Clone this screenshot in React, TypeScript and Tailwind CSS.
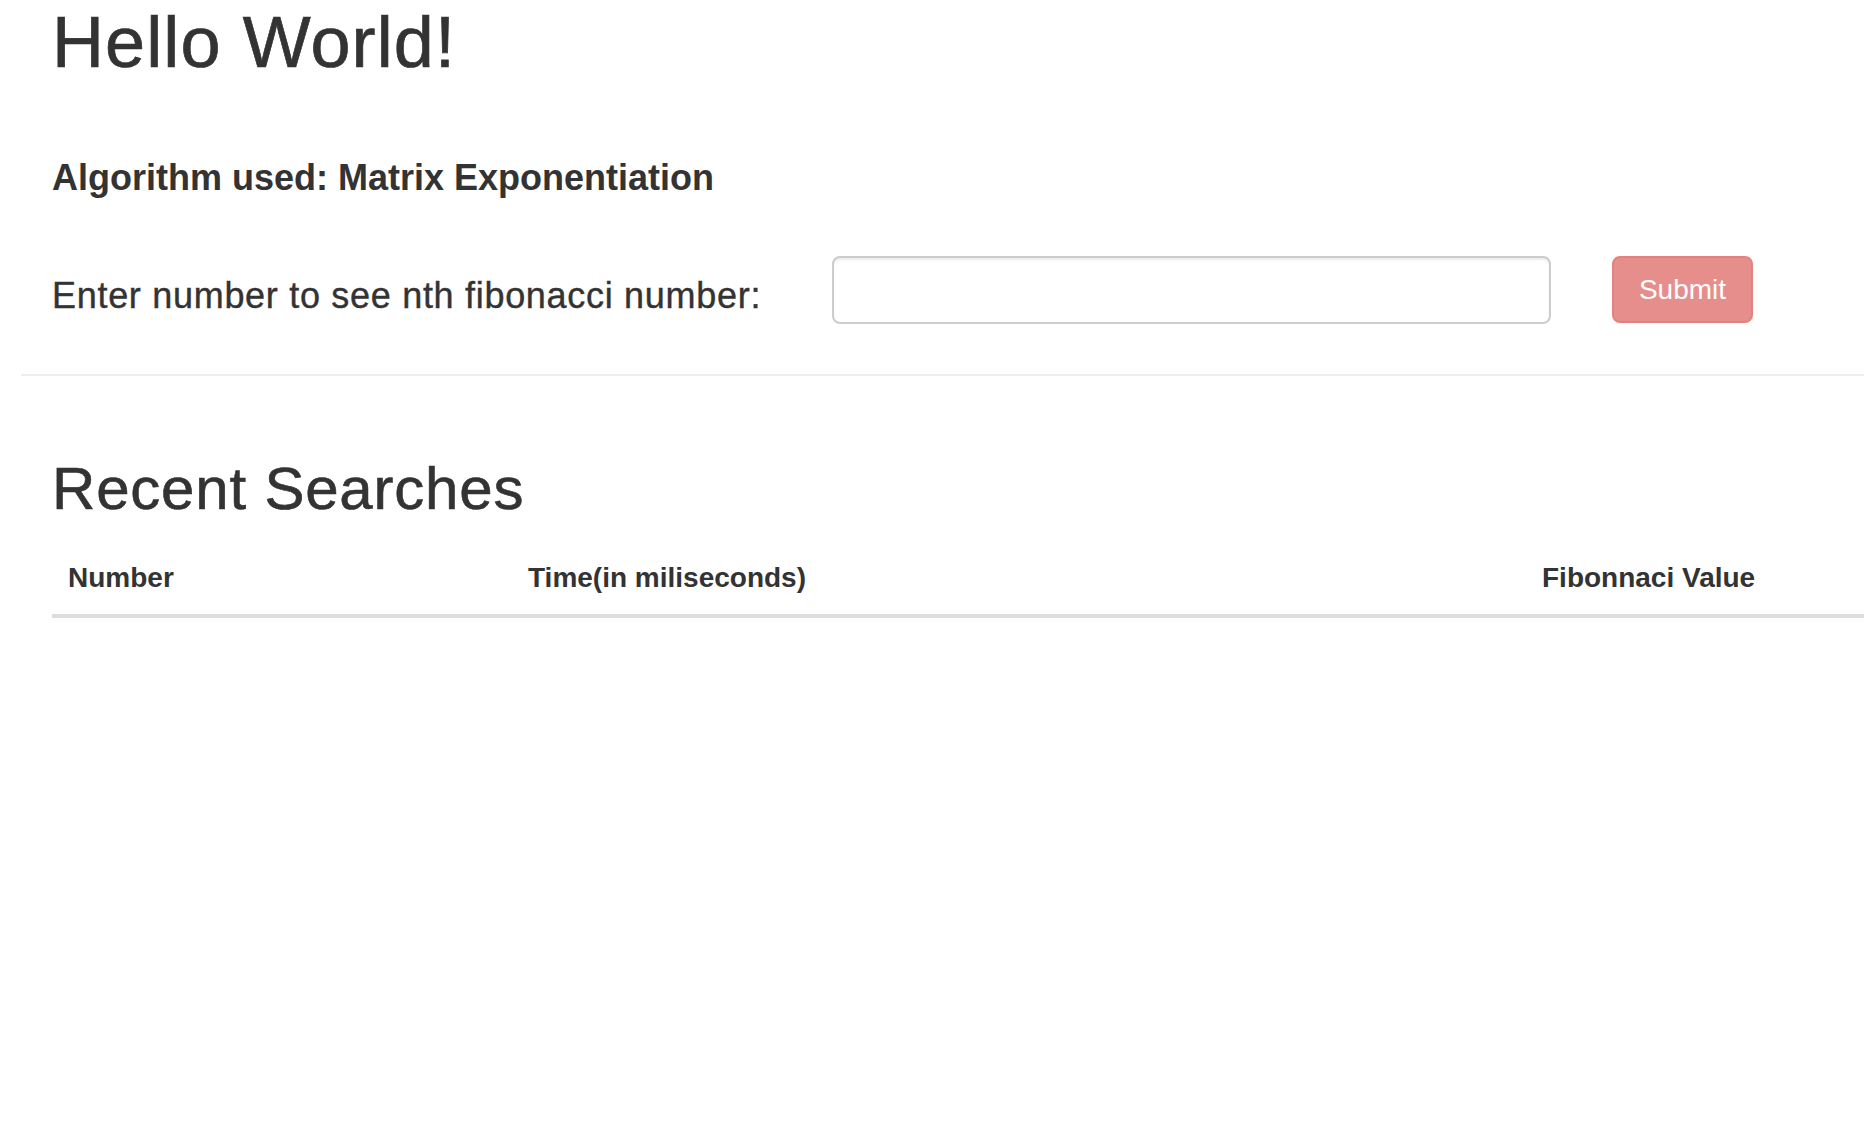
import React, { useState } from 'react';

const columns = [
  { label: 'Number', width: 'w-[460px]' },
  { label: 'Time(in miliseconds)', width: 'w-[1014px]' },
  { label: 'Fibonnaci Value', width: '' },
];

export default function App() {
  const [value, setValue] = useState('');

  return (
    <div className="min-h-screen w-full overflow-hidden bg-white text-[#333333] font-['Liberation_Sans',Arial,sans-serif]">
      <div className="pl-[52px]">
        <h1 className="mt-[3px] text-[72px] leading-[79px] font-normal tracking-[1.1px] [-webkit-text-stroke:0.7px_#333333]">
          Hello World!
        </h1>
        <h4 className="mt-[76px] text-[36px] leading-[40px] font-bold">
          Algorithm used: Matrix Exponentiation
        </h4>

        <div className="mt-[58px] flex items-start">
          <label className="mt-[20px] w-[780px] shrink-0 text-[36px] leading-[40px] font-normal tracking-[0.7px] [-webkit-text-stroke:0.4px_#333333]">
            Enter number to see nth fibonacci number:
          </label>
          <input
            type="text"
            value={value}
            onChange={(e) => setValue(e.target.value)}
            className="h-[68px] w-[719px] shrink-0 rounded-[8px] border-2 border-[#cccccc] bg-white px-6 text-[28px] shadow-[inset_0_2px_2px_rgba(0,0,0,0.075)] outline-none"
          />
          <button
            disabled
            className="ml-[61px] h-[67px] w-[141px] shrink-0 rounded-[8px] border-2 border-[#e3827f] bg-[#e68e8b] text-[28px] leading-[40px] text-white"
          >
            Submit
          </button>
        </div>
      </div>

      <hr className="mt-[50px] ml-[21px] border-0 border-t-2 border-[#eeeeee]" />

      <div className="pl-[52px]">
        <h2 className="mt-[80px] text-[60px] leading-[66px] font-normal tracking-[0.8px] [-webkit-text-stroke:0.6px_#333333]">
          Recent Searches
        </h2>
        <table className="mt-[28px] w-[1812px] border-collapse">
          <thead>
            <tr className="border-b-4 border-[#dddddd]">
              {columns.map((col) => (
                <th
                  key={col.label}
                  className={`${col.width} px-4 pt-2 pb-4 text-left text-[28px] leading-[40px] font-bold`}
                >
                  {col.label}
                </th>
              ))}
            </tr>
          </thead>
          <tbody />
        </table>
      </div>
    </div>
  );
}
